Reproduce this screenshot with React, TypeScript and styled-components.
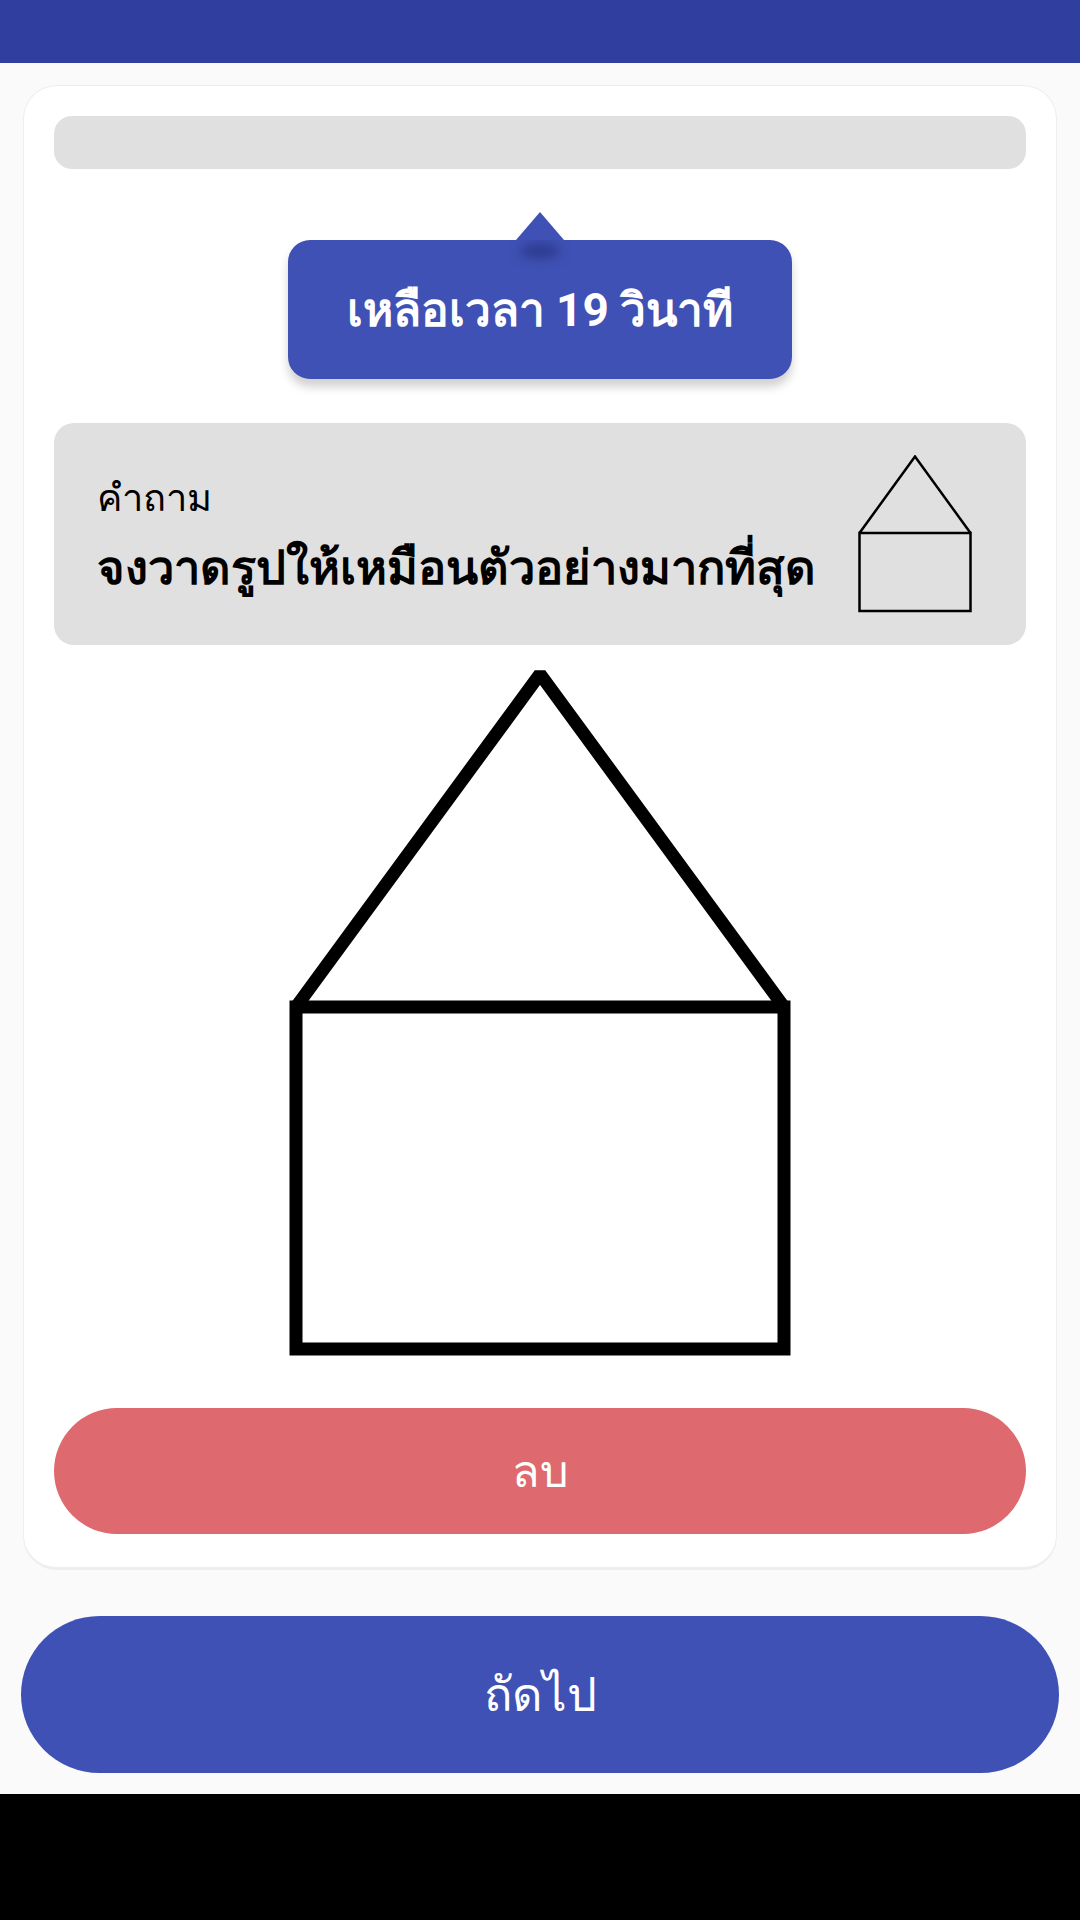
import React from "react";
import styled, { createGlobalStyle } from "styled-components";

const Global = createGlobalStyle`
  html, body { margin: 0; padding: 0; background: #FAFAFA; }
  body { font-family: Roboto, "Noto Sans", sans-serif; }
  * { box-sizing: border-box; }
`;

const Screen = styled.div`
  width: 1080px;
  height: 1920px;
  display: flex;
  flex-direction: column;
  background: #FAFAFA;
  overflow: hidden;
`;

const AppBar = styled.div`
  height: 63px;
  flex: none;
  background: #303F9F;
`;

const Content = styled.main`
  flex: 1;
  display: flex;
  flex-direction: column;
  padding: 22px 21px 0;
`;

const Card = styled.section`
  margin: 0 2px;
  background: #fff;
  border: 1px solid #EEEEEE;
  border-bottom-width: 3px;
  border-radius: 34px;
  padding: 30px 30px 33px;
  display: flex;
  flex-direction: column;
`;

const Progress = styled.div`
  height: 53px;
  border-radius: 18px;
  background: #E0E0E0;
`;

const TooltipWrap = styled.div`
  margin-top: 43px;
  display: flex;
  flex-direction: column;
  align-items: center;
`;

const Arrow = styled.div`
  width: 0;
  height: 0;
  border-left: 24px solid transparent;
  border-right: 24px solid transparent;
  border-bottom: 28px solid #3F51B5;
  position: relative;
  z-index: 1;
`;

const Tooltip = styled.div`
  width: 504px;
  height: 139px;
  border-radius: 22px;
  background: #3F51B5;
  color: #fff;
  display: flex;
  align-items: center;
  justify-content: center;
  font-size: 46px;
  font-weight: 700;
  box-shadow: 0 8px 10px rgba(0, 0, 0, 0.18);
  position: relative;
  &::before {
    content: "";
    position: absolute;
    left: 50%;
    top: 4px;
    width: 40px;
    height: 14px;
    transform: translateX(-50%);
    border-radius: 50%;
    background: rgba(30, 40, 110, 0.6);
    filter: blur(6px);
  }
`;

const Question = styled.div`
  margin-top: 44px;
  height: 222px;
  border-radius: 20px;
  background: #E0E0E0;
  display: flex;
  align-items: center;
  padding: 0 54px 0 43px;
`;

const QuestionText = styled.div`
  flex: 1;
  display: flex;
  flex-direction: column;
  gap: 2px;
  color: #000;
  padding-top: 4px;
`;

const Label = styled.div`
  font-size: 38px;
  font-weight: 400;
`;

const Prompt = styled.div`
  font-size: 47px;
  font-weight: 700;
  white-space: nowrap;
`;

const Sample = styled.svg`
  flex: none;
  width: 114px;
  height: 158px;
`;

const DrawArea = styled.div`
  height: 763px;
  display: flex;
  justify-content: center;
  align-items: flex-start;
  padding-top: 21px;
`;

const Drawing = styled.svg`
  width: 502px;
  height: 690px;
`;

const PillButton = styled.button<{ $bg: string; $h: number; $fs: number }>`
  border: none;
  width: 100%;
  height: ${(p) => p.$h}px;
  border-radius: ${(p) => p.$h / 2}px;
  background: ${(p) => p.$bg};
  color: #fff;
  font-family: Roboto, "Noto Sans", sans-serif;
  font-size: ${(p) => p.$fs}px;
  font-weight: 400;
  display: flex;
  align-items: center;
  justify-content: center;
  padding: 0;
`;

const NextRow = styled.div`
  margin-top: 46px;
`;

const NavBar = styled.div`
  height: 126px;
  flex: none;
  background: #000;
`;

export default function App() {
  return (
    <>
      <Global />
      <Screen>
        <AppBar />
        <Content>
          <Card>
            <Progress />
            <TooltipWrap>
              <Arrow />
              <Tooltip>เหลือเวลา 19 วินาที</Tooltip>
            </TooltipWrap>
            <Question>
              <QuestionText>
                <Label>คำถาม</Label>
                <Prompt>จงวาดรูปให้เหมือนตัวอย่างมากที่สุด</Prompt>
              </QuestionText>
              <Sample viewBox="0 0 114 158">
                <g fill="none" stroke="#000" strokeWidth="2.5">
                  <path d="M1.5 78 L57 1.5 L112.5 78" />
                  <rect x="1.5" y="78" width="111" height="78" />
                </g>
              </Sample>
            </Question>
            <DrawArea>
              <Drawing viewBox="0 0 502 690">
                <g fill="none" stroke="#000" strokeWidth="13">
                  <path d="M7 341 L251 8 L495 341" strokeLinejoin="bevel" />
                  <rect x="7" y="341" width="488" height="342" />
                </g>
              </Drawing>
            </DrawArea>
            <PillButton $bg="#DE696E" $h={126} $fs={45}>
              ลบ
            </PillButton>
          </Card>
          <NextRow>
            <PillButton $bg="#3F51B5" $h={157} $fs={47}>
              ถัดไป
            </PillButton>
          </NextRow>
        </Content>
        <NavBar />
      </Screen>
    </>
  );
}
